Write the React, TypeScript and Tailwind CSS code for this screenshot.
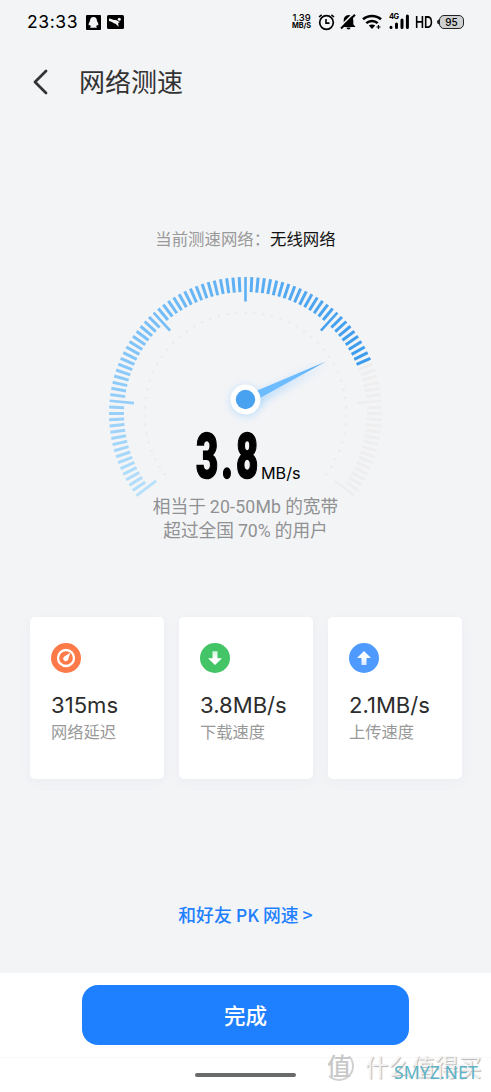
import React from "react";

const CX = 145.5;
const CY = 143.5;
const STEP = 127 / 48;

function point(deg: number, r: number): [number, number] {
  const a = (deg * Math.PI) / 180;
  return [CX + r * Math.sin(a), CY - r * Math.cos(a)];
}

function mix(t: number): string {
  const stops = [
    [181, 223, 251],
    [107, 184, 247],
    [60, 155, 236],
  ];
  const k = t * 2 < 1 ? 0 : 1;
  const f = t * 2 - k;
  const c = stops[k].map((v, i) => Math.round(v + (stops[k + 1][i] - v) * f));
  return `rgb(${c[0]},${c[1]},${c[2]})`;
}

function Gauge() {
  const ticks = [];
  for (let i = -48; i <= 48; i++) {
    const major = i % 16 === 0;
    const [x1, y1] = point(i * STEP, 136.5);
    const [x2, y2] = point(i * STEP, major ? 112 : 121.5);
    const color = i <= 25 ? mix((i + 48) / 73) : "#eeeeef";
    ticks.push(
      <line key={i} x1={x1} y1={y1} x2={x2} y2={y2} stroke={color} strokeWidth={major ? 2.6 : 3} />
    );
  }
  const dots = [];
  for (let i = -25; i <= 25; i++) {
    const [x, y] = point((i * 127) / 25, 101);
    dots.push(<circle key={i} cx={x} cy={y} r="1.4" fill="#ebecee" />);
  }
  return (
    <svg className="absolute left-0 top-0" width="291" height="240" viewBox="0 0 291 240">
      <defs>
        <filter id="glow" x="-50%" y="-50%" width="200%" height="200%">
          <feGaussianBlur stdDeviation="4" />
        </filter>
        <linearGradient id="needle" x1="0" x2="1" y1="1" y2="0">
          <stop offset="0" stopColor="#6dbcff" />
          <stop offset="0.6" stopColor="#6dbcff" />
          <stop offset="1" stopColor="#55a9ee" />
        </linearGradient>
      </defs>
      {dots}
      {ticks}
      <path d="M145 127 L226 91.5 L150 138 Z" fill="#8fcaff" opacity="0.55" filter="url(#glow)" transform="translate(0 2)" />
      <circle cx="145.5" cy="131" r="15" fill="#8fcaff" opacity="0.55" filter="url(#glow)" />
      <path d="M156 121 L226 91.5 L160 128 Z" fill="url(#needle)" />
      <circle cx="145.5" cy="129.5" r="15" fill="#fff" />
      <circle cx="145.5" cy="129.5" r="9.7" fill="#49a2ef" />
    </svg>
  );
}

function StatusBar() {
  return (
    <div className="flex h-[44px] items-center pl-[27px] pr-[27px] text-black">
      <span className="w-[59px] font-[Inter] text-[17.500px] leading-[20px] tracking-[0.6px]">23:33</span>
      <svg width="15" height="15" viewBox="0 0 15 15">
        <rect width="15" height="15" rx="1" fill="#000" />
        <path d="M7.5 2C5 2 4 4 4 6 3 7.500 2.300 9.200 2.800 10.600L4 10l.8 1.600L4 12.800h7l-.8-1.200L11 10l1.200.6C12.700 9.200 12 7.500 11 6 11 4 10 2 7.500 2Z" fill="#f3f4f6" />
      </svg>
      <svg className="ml-[6px]" width="17" height="14" viewBox="0 0 17 14">
        <rect width="17" height="14" rx="1.500" fill="#000" />
        <path d="M2 3.400C4.500 3.400 5.500 5.200 8 5c1.800-.2 2.800 1.200 5 2l-1.800 1 .4 3.700-2-1.900C8.800 8.500 7.200 8.800 5.800 7.600 4.500 6.600 3.200 6.400 2 6Z" fill="#f3f4f6" />
        <circle cx="12.300" cy="4.300" r="1.500" fill="#f3f4f6" />
      </svg>
      <div className="ml-auto flex items-center">
        <div className="w-[21px] text-center font-[Inter] font-semibold">
          <div className="text-[9.500px] font-medium leading-[8px] tracking-[-0.1px]">1.39</div>
          <div className="text-[7.300px] font-bold leading-[8px]">MB/S</div>
        </div>
        <svg className="ml-[6px]" width="17" height="17" viewBox="0 0 17 17" fill="none" stroke="#000">
          <circle cx="8.500" cy="8.500" r="6.800" strokeWidth="1.700" />
          <path d="M8 5V9.100H11.500" strokeWidth="1.600" />
          <path d="M1 3 3.600 .8M16 3 13.400 .8" strokeWidth="1.600" />
        </svg>
        <svg className="ml-[5px]" width="17" height="17" viewBox="0 0 17 17">
          <path d="M8.500 1c3.200.3 4.800 2.600 4.800 5.300v3.900l2.200 2.800H1.500l2.200-2.800V6.300C3.700 3.600 5.300 1.300 8.500 1Z" fill="#000" />
          <path d="M6.500 13.500h4a2 2 0 0 1-4 0Z" fill="#000" />
          <path d="M0 13 13 0" stroke="#f3f4f6" strokeWidth="1.600" />
          <path d="M1 14.500 15 .8" stroke="#000" strokeWidth="2" />
        </svg>
        <svg className="ml-[5px]" width="21" height="17" viewBox="0 0 21 17" fill="none" stroke="#000" strokeWidth="2.500">
          <path d="M1 5.300C6 .8 14 .8 19 5.300" />
          <path d="M4.300 9.200C7.500 6.100 12.500 6.100 15.700 9.200" />
          <path d="M6.800 11.500 10 15l3.200-3.500c-1.800-1.500-4.600-1.500-6.400 0Z" fill="#000" stroke="none" />
          <path d="M14.500 13h4M16.500 11v4" strokeWidth="1.200" />
        </svg>
        <div className="relative ml-[6px] h-[17px] w-[20px]">
          <span className="absolute left-0 top-[-1px] font-[Inter] text-[7.500px] font-bold leading-[8px] tracking-[-0.5px]">4G</span>
          <svg width="20" height="17" viewBox="0 0 20 17" fill="none" stroke="#000" strokeWidth="3" strokeLinecap="round">
            <path d="M2 13.200v.3M7.500 10v3.500M13 6v7.500M18.400 2v11.500" />
          </svg>
        </div>
        <span className="ml-[6px] w-[18px] origin-left scale-x-[0.74] font-[Inter] text-[16.500px] font-semibold leading-[20px]">HD</span>
        <svg className="ml-[2px]" width="5" height="14" viewBox="0 0 5 14">
          <path d="M4.500 4.500A2.500 2.500 0 0 0 4.500 9.500Z" fill="#222" />
        </svg>
        <span className="-ml-[1px] h-[14px] w-[25px] rounded-[5px] border-[1.500px] border-[#222] bg-[#cfd0d2] text-center font-[Inter] text-[10px] font-medium leading-[12px]">95</span>
      </div>
    </div>
  );
}

function Card({ icon, value, label }: { icon: React.ReactNode; value: string; label: string }) {
  return (
    <div className="h-[162px] flex-1 rounded-[5px] bg-white pl-[21.500px] pt-[26px] shadow-[0_3px_10px_rgba(200,205,225,0.16)]">
      {icon}
      <div className="mt-[18px] font-[Inter] text-[22.100px] leading-[28px] text-[#2d2d2d]">{value}</div>
      <div className="text-[16.300px] leading-[24px] text-[#999]">{label}</div>
    </div>
  );
}

const latencyIcon = (
  <svg width="30" height="30" viewBox="0 0 30 30">
    <circle cx="15" cy="15" r="15" fill="#ff7a49" />
    <circle cx="15" cy="15" r="8" fill="none" stroke="#fff" strokeWidth="2.300" />
    <path d="M19.300 9.800 17.300 16.200A2.600 2.600 0 1 1 13.300 13.400Z" fill="#fff" />
  </svg>
);

const downloadIcon = (
  <svg width="30" height="30" viewBox="0 0 30 30">
    <defs>
      <linearGradient id="down" x1="0" x2="0" y1="0" y2="1">
        <stop offset="0" stopColor="#fff" stopOpacity="0.75" />
        <stop offset="0.5" stopColor="#fff" />
      </linearGradient>
    </defs>
    <circle cx="15" cy="15" r="15" fill="#43c467" />
    <path d="M12.500 8.200h5v7h4.500L15 22l-7-6.800h4.500Z" fill="url(#down)" />
  </svg>
);

const uploadIcon = (
  <svg width="30" height="30" viewBox="0 0 30 30">
    <defs>
      <linearGradient id="up" x1="0" x2="0" y1="0" y2="1">
        <stop offset="0.5" stopColor="#fff" />
        <stop offset="1" stopColor="#fff" stopOpacity="0.75" />
      </linearGradient>
    </defs>
    <circle cx="15" cy="15" r="15" fill="#4f9aff" />
    <path d="M12.500 22h5v-7h4.500L15 8l-7 7h4.500Z" fill="url(#up)" />
  </svg>
);

export default function App() {
  return (
    <div className="relative flex h-[1092px] w-[491px] flex-col overflow-hidden bg-[#f3f4f6] font-['Noto_Sans_CJK_SC',sans-serif]">
      <StatusBar />
      <header className="flex h-[76px] items-center">
        <svg className="ml-[32px]" width="17" height="26" viewBox="0 0 17 26" fill="none" stroke="#333" strokeWidth="2.800" strokeLinecap="round" strokeLinejoin="round">
          <path d="M14 2 3 13 14 24" />
        </svg>
        <h1 className="mb-[2px] ml-[30px] text-[26px] leading-[40px] text-[#333]">网络测速</h1>
      </header>

      <div className="mt-[106px] whitespace-nowrap text-center text-[16.400px] leading-[24px] text-[#999]">
        当前测速网络：<span className="text-[#111]">无线网络</span>
      </div>

      <div className="relative ml-[100px] mt-[20px] flex h-[220px] w-[291px] flex-col justify-end">
        <Gauge />
        <div className="relative flex h-[66px] items-end pl-[96px]">
          <div className="w-[65px]">
            <span className="inline-block origin-left scale-x-[0.610] font-[Roboto] text-[63px] font-black leading-[66px] tracking-[5px] text-black [-webkit-text-stroke:1.700px_black]">3.8</span>
          </div>
          <span className="pb-[5px] font-[Inter] text-[16.200px] leading-[24px] text-black">MB/s</span>
        </div>
      </div>

      <div className="mt-[3px] whitespace-nowrap text-center text-[17.700px] leading-[24px] text-[#909193]">
        <p className="h-[24px]">相当于 <span className="font-[Roboto] tracking-[0.2px]">20-50Mb</span> 的宽带</p>
        <p className="h-[24px]">超过全国 <span className="font-[Roboto]">70%</span> 的用户</p>
      </div>

      <div className="ml-[29.500px] mr-[29.500px] mt-[76px] flex gap-[15px]">
        <Card icon={latencyIcon} value="315ms" label="网络延迟" />
        <Card icon={downloadIcon} value="3.8MB/s" label="下载速度" />
        <Card icon={uploadIcon} value="2.1MB/s" label="上传速度" />
      </div>

      <a className="mt-[123px] text-center text-[17.800px] font-medium leading-[24px] text-[#1f80ff]">和好友 PK 网速 &gt;</a>

      <footer className="mt-auto flex h-[119px] flex-col items-center bg-white pt-[12px]">
        <button className="h-[60px] w-[327px] rounded-[16px] bg-[#1f80ff] pb-[1px] text-[21.500px] font-medium leading-[58px] text-white">完成</button>
        <div className="mt-[12px] h-px w-full bg-[#f8f8f8]" />
        <div className="mt-[15px] h-[4px] w-[101px] rounded-full bg-[#686b69]" />
      </footer>

      <div className="absolute left-[324px] top-[1050px] flex items-center gap-[11px] whitespace-nowrap text-[#f4f4f4] [text-shadow:1px_1px_1px_#b4b4b4]">
        <span className="h-[30px] w-[30px] rounded-full border-2 border-l-transparent border-t-transparent border-b-[#d0d0d0] border-r-[#d0d0d0] text-center text-[24px] font-medium leading-[24px] text-[#c8c8c8] [text-shadow:none]">值</span>
        <span className="text-[23.300px] leading-[32px]">什么值得买</span>
      </div>
      <div className="absolute left-[394px] top-[1060px] font-['Noto_Sans'] text-[17.700px] leading-[24px] text-[#5db2c6]">SMYZ.NET</div>
    </div>
  );
}
